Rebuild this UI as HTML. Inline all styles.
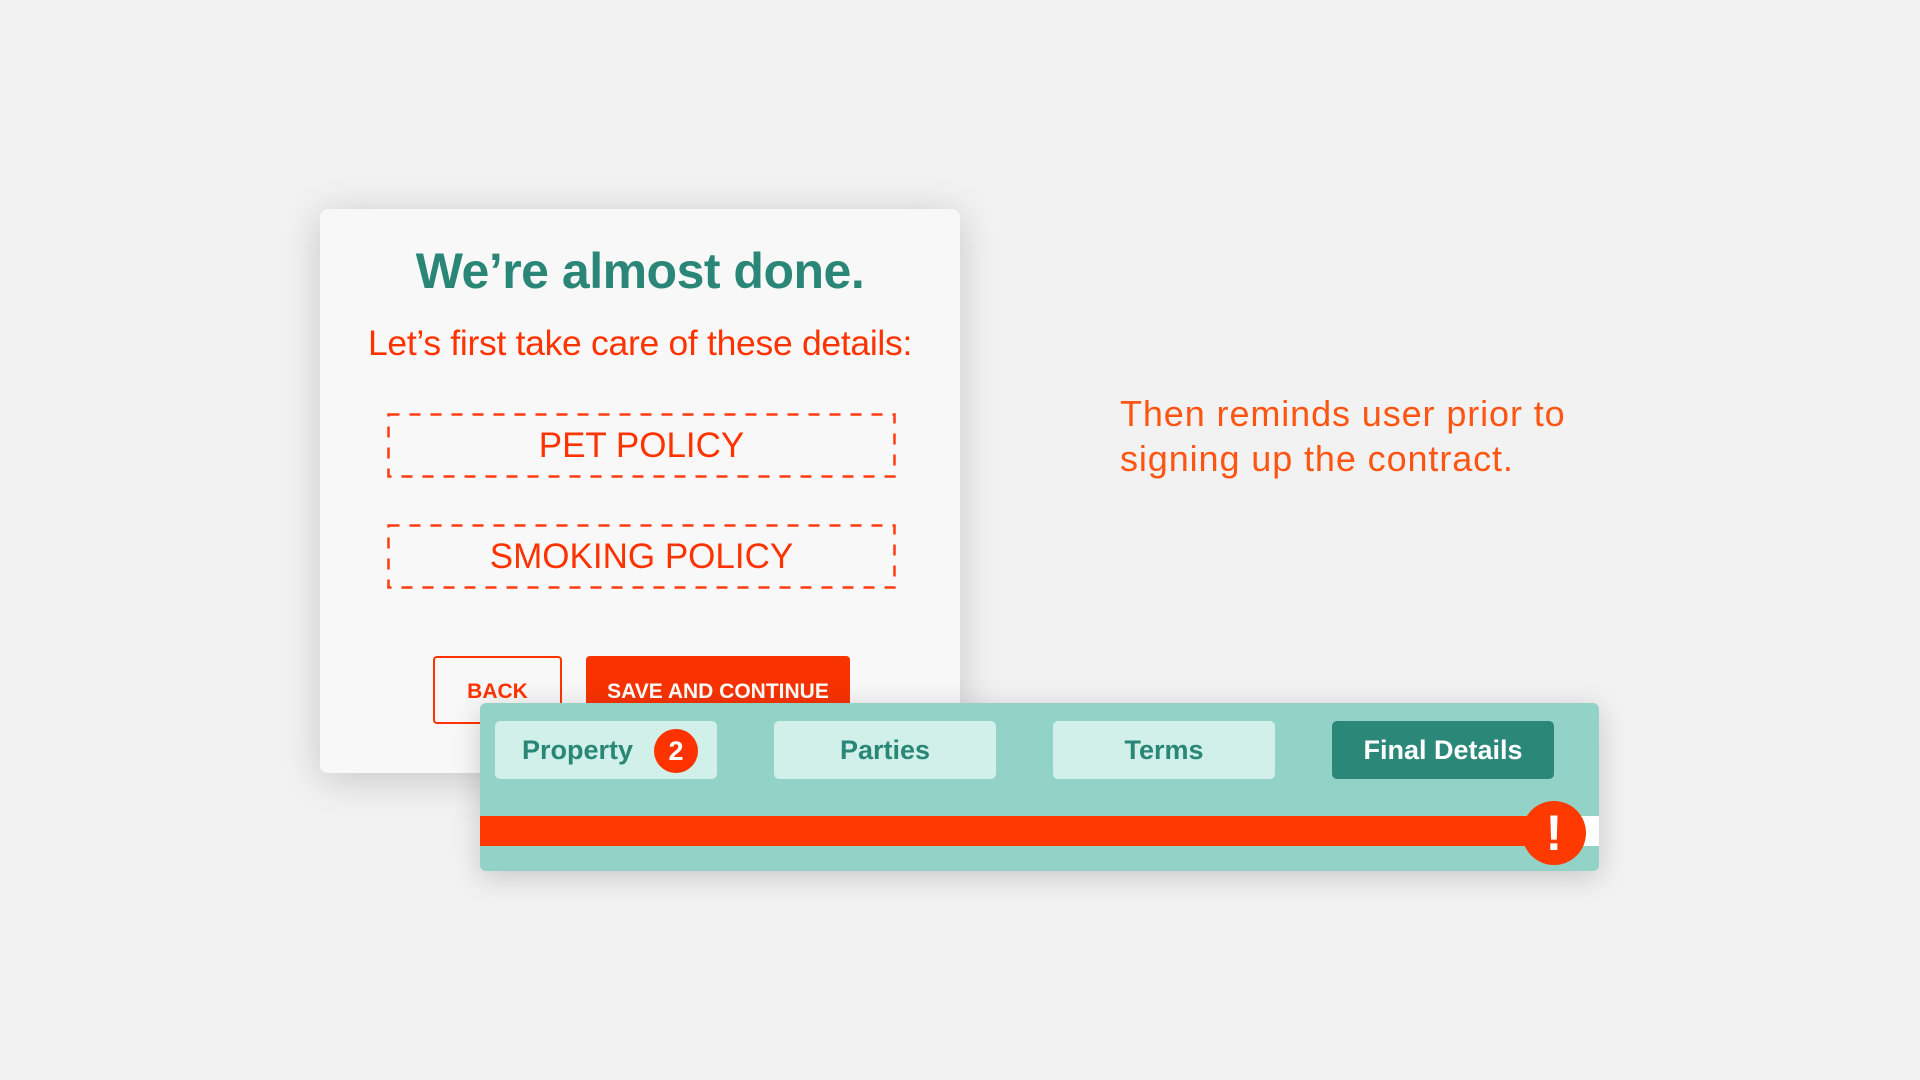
<!DOCTYPE html>
<html><head><meta charset="utf-8"><style>
*{margin:0;padding:0;box-sizing:border-box}
body{width:1920px;height:1080px;background:#f2f2f2;position:relative;overflow:hidden;font-family:"Liberation Sans",Arial,sans-serif}
.card{position:absolute;left:320px;top:209px;width:640px;height:564px;background:#f8f8f8;border-radius:8px;box-shadow:0 6px 40px rgba(0,0,0,0.18)}
.abs{position:absolute;white-space:nowrap}
.title{left:0;width:640px;text-align:center;top:242px;font-size:50px;font-weight:bold;color:#2a8676;letter-spacing:-0.5px}
.sub{left:0;width:640px;text-align:center;top:323px;font-size:35.5px;color:#ff3300;letter-spacing:-0.3px}
.dash{position:absolute;left:387px;width:509px;height:65px;color:#ff3300;font-size:35px;text-align:center;line-height:65px}
.dash svg{position:absolute;left:0;top:0}
.btn{position:absolute;top:656px;height:68px;border-radius:4px;font-weight:bold;font-size:21px;text-align:center;line-height:68px;padding-top:2px}
.bar{position:absolute;left:480px;top:703px;width:1119px;height:168px;background:#93d2c6;border-radius:6px;box-shadow:0 6px 30px rgba(0,0,0,0.18);overflow:hidden}
.tab{position:absolute;top:18px;height:58px;width:222px;background:#d0f0e9;border-radius:5px;color:#2a8676;font-weight:bold;font-size:27px;text-align:center;line-height:58px}
</style></head><body>
<div class="card"></div>
<div class="abs title" style="left:320px">We’re almost done.</div>
<div class="abs sub" style="left:320px">Let’s first take care of these details:</div>
<div class="dash" style="top:413px"><svg width="509" height="65"><rect x="1.5" y="1.5" width="506" height="62" fill="none" stroke="#ff3a10" stroke-width="2.5" stroke-dasharray="11 10"/></svg><span style="position:relative">PET POLICY</span></div>
<div class="dash" style="top:524px"><svg width="509" height="65"><rect x="1.5" y="1.5" width="506" height="62" fill="none" stroke="#ff3a10" stroke-width="2.5" stroke-dasharray="11 10"/></svg><span style="position:relative">SMOKING POLICY</span></div>
<div class="btn" style="left:433px;width:129px;border:2px solid #ff3300;color:#ff3300;background:#f8f8f8;line-height:64px">BACK</div>
<div class="btn" style="left:586px;width:264px;background:#f83300;color:#fff">SAVE AND CONTINUE</div>
<div class="bar">
  <div class="tab" style="left:15px;text-align:left;padding-left:27px">Property</div>
  <div style="position:absolute;left:174px;top:26px;width:44px;height:44px;border-radius:50%;background:#ff3300;color:#fff;font-weight:bold;font-size:27px;text-align:center;line-height:44px">2</div>
  <div class="tab" style="left:294px">Parties</div>
  <div class="tab" style="left:573px">Terms</div>
  <div class="tab" style="left:852px;background:#2b8878;color:#fff">Final Details</div>
  <div style="position:absolute;left:0;top:113px;width:1119px;height:30px;background:#fff"></div>
  <div style="position:absolute;left:0;top:113px;width:1080px;height:30px;background:#ff3a00"></div>
  <div style="position:absolute;left:1042px;top:98px;width:64px;height:64px;border-radius:50%;background:#ff3a00;color:#fff;font-size:50px;text-align:center;line-height:64px;font-weight:bold">!</div>
</div>
<div class="abs" style="left:1120px;top:391px;font-size:36px;line-height:45px;color:#ff5512;letter-spacing:0.9px">Then reminds user prior to<br>signing up the contract.</div>
</body></html>
